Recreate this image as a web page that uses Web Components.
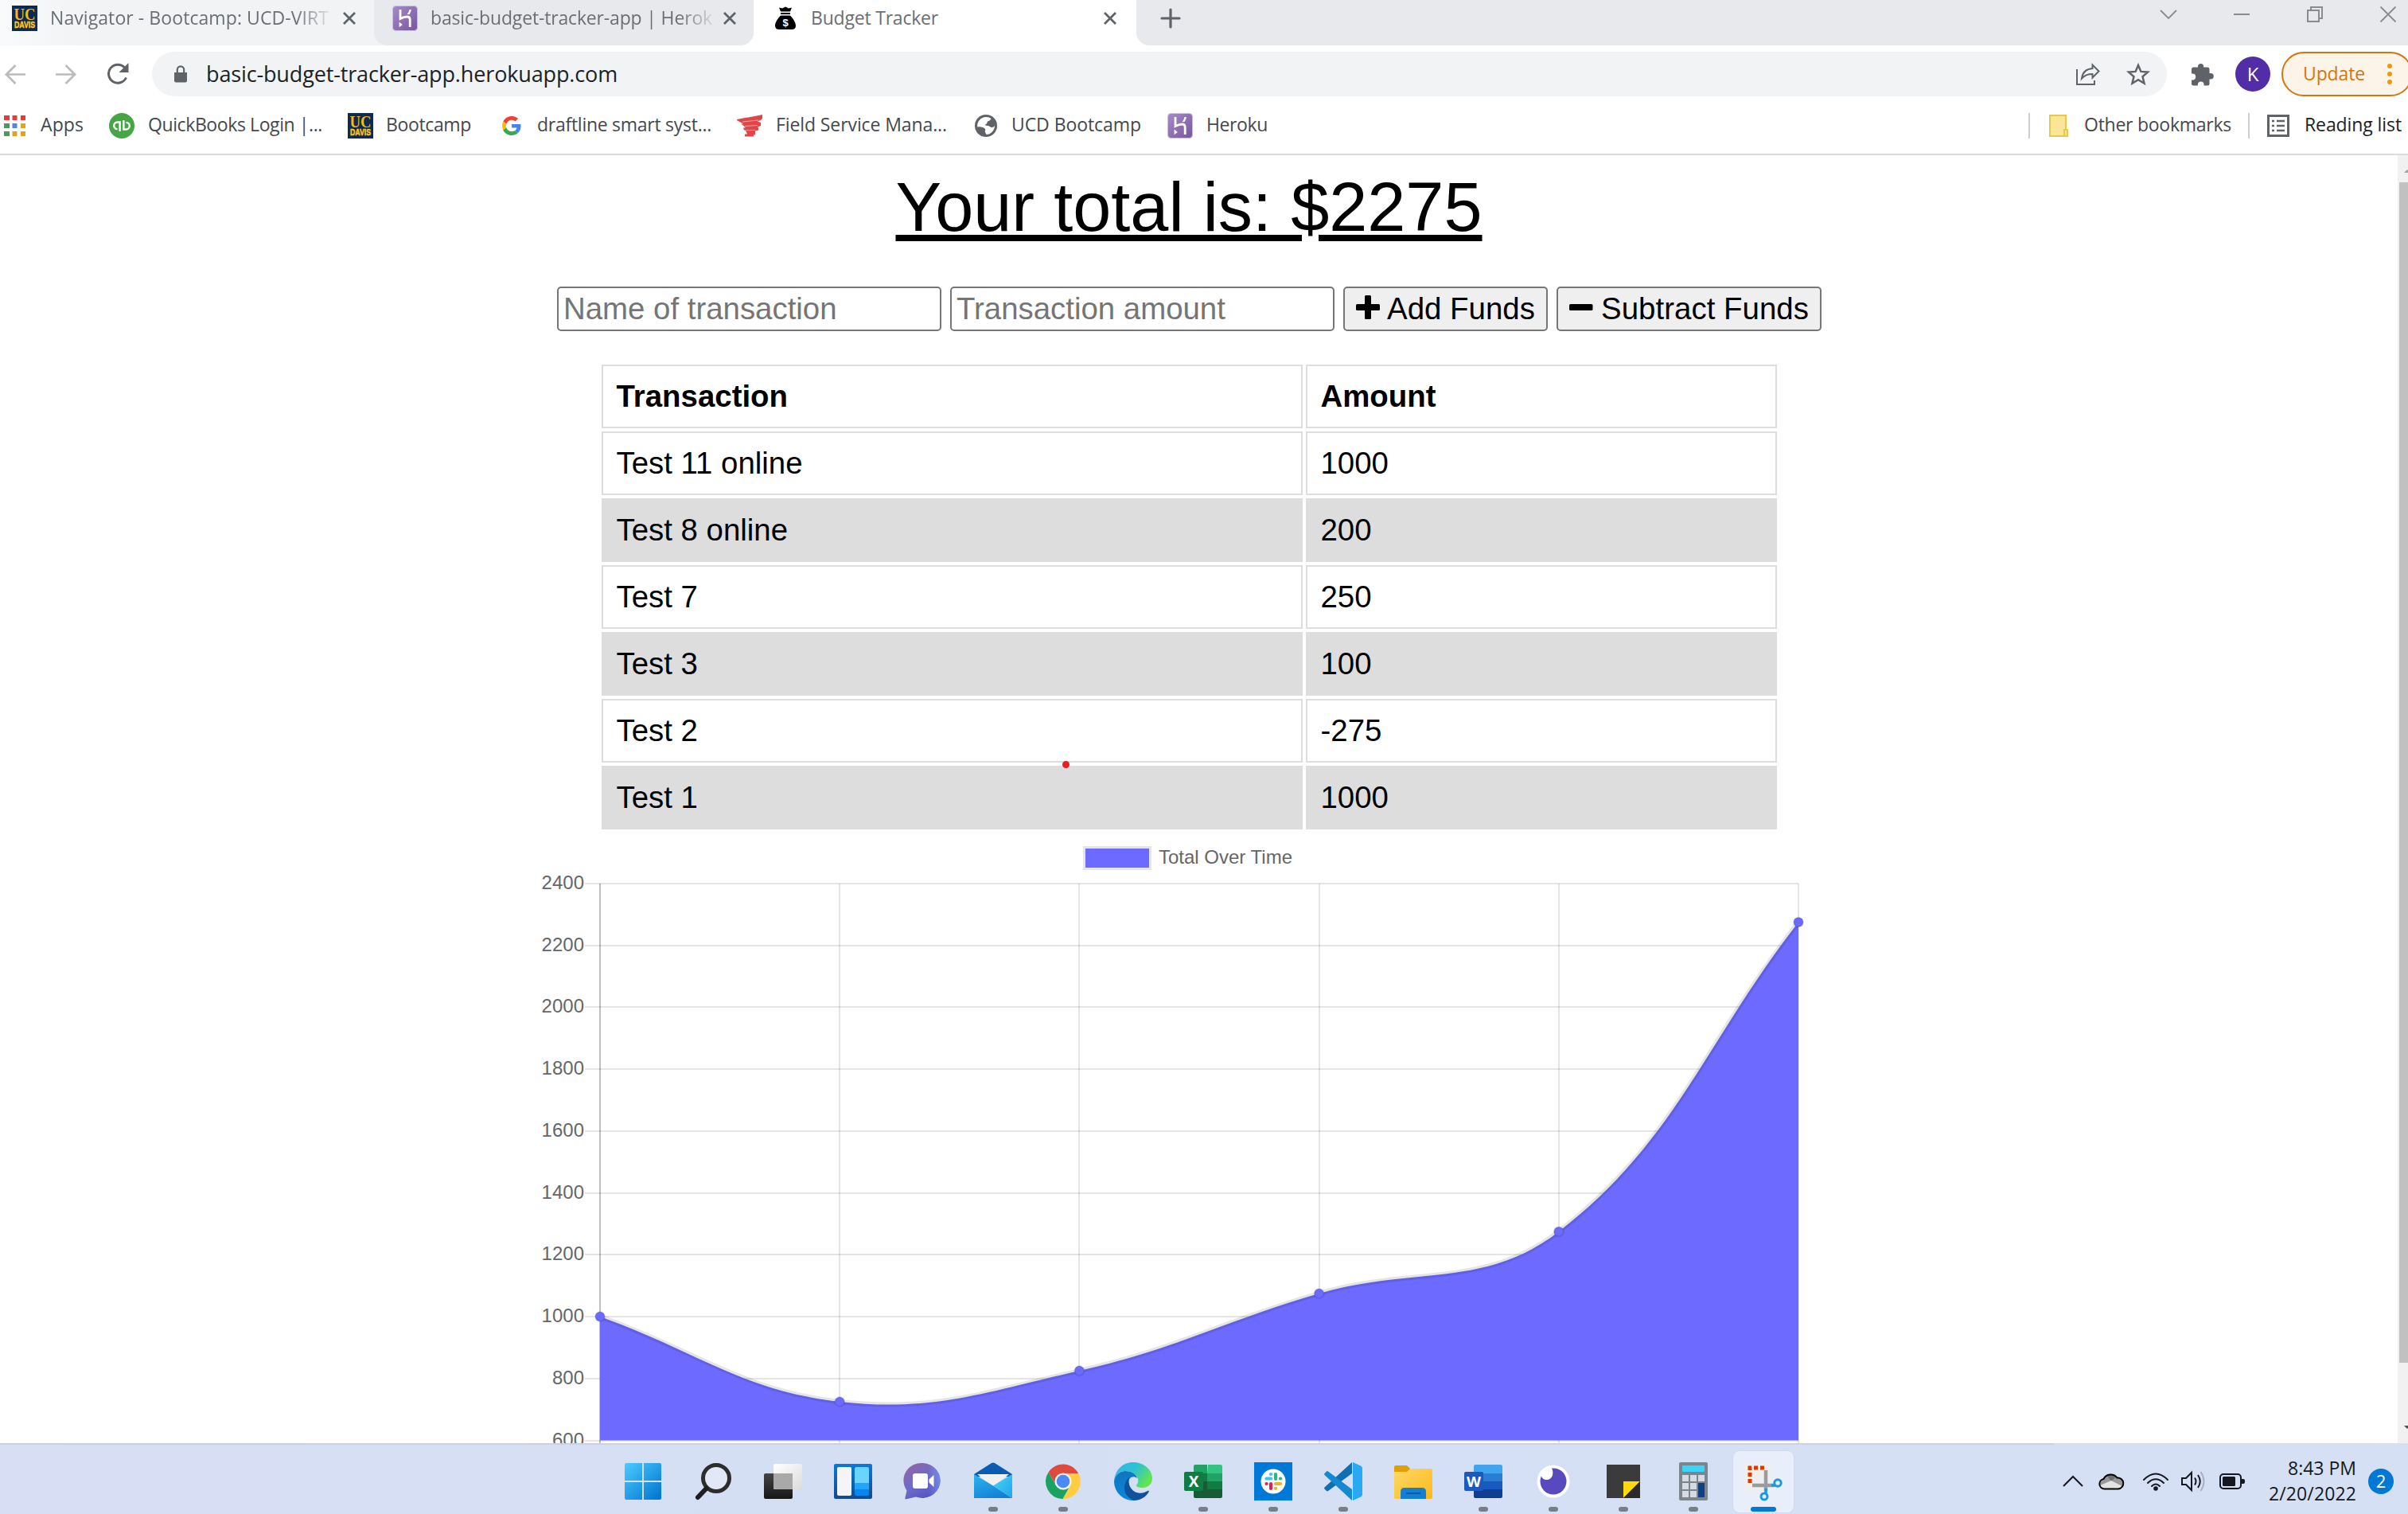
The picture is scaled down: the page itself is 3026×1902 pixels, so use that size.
<!DOCTYPE html>
<html lang="en">
<head>
<meta charset="utf-8">
<title>Budget Tracker</title>
<style>
html,body{margin:0;height:100%;overflow:hidden;background:#fff}
body{font-family:"Open Sans","Noto Sans",sans-serif}
</style>
</head>
<body>
<desktop-screen></desktop-screen>
<script>
const ICONS = {
  davis: `<svg viewBox="0 0 32 32"><path fill="#0f2a52" d="M0 0h32v32H0z"/><text x="16" y="17.500" text-anchor="middle" textLength="27" lengthAdjust="spacingAndGlyphs" font-family="Liberation Serif,serif" font-weight="bold" font-size="20" fill="#f2bb13">UC</text><text x="16" y="27.500" text-anchor="middle" textLength="26" lengthAdjust="spacingAndGlyphs" font-family="Liberation Sans,sans-serif" font-weight="bold" font-size="10.500" fill="#ffc71a" stroke="#ffc71a" stroke-width=".5">DAVIS</text></svg>`,
  heroku: `<svg viewBox="0 0 32 32"><defs><linearGradient id="g" x2="1" y2="1"><stop stop-color="#a58bcb"/><stop offset="1" stop-color="#7a559c"/></linearGradient></defs><rect x=".5" y=".5" width="31" height="31" rx="4" fill="url(#g)" stroke="#cdbfe0"/><path fill="none" stroke="#fff" stroke-width="2.800" d="M10 5v11.500q5-2.500 8.500-2.500 3.700 0 3.700 4V27"/><path fill="#fff" d="M8.600 20.500l4.200 3.400-4.200 3.400zM18.500 11q2.600-2.600 3-6h2.300q-.3 3.300-2.300 6z"/></svg>`,
  bag: `<svg viewBox="0 0 28 30"><path d="M6 1.500l4 1L14 .5l4 2 4-1-2 5H8zM8 8h12v2H8zM8 11.500h12c4 4 7 9 7 13 0 3-2 4.500-5 4.500H6c-3 0-5-1.500-5-4.500 0-4 3-9 7-13z"/><text x="14" y="24.500" text-anchor="middle" font-size="13" font-family="Liberation Sans,sans-serif" font-weight="bold" fill="#fff">$</text></svg>`,
  x: `<svg viewBox="0 0 18 18"><path d="M2 2l14 14M16 2L2 16" stroke="#5f6368" stroke-width="2.800"/></svg>`,
  plus: `<svg viewBox="0 0 26 26"><path d="M13 2v22M2 13h22" stroke="#5f6368" stroke-width="3.200" stroke-linecap="round"/></svg>`,
  chev: `<svg viewBox="0 0 20 20"><path d="M0 5l10 10L20 5" fill="none" stroke="#8a8b8e" stroke-width="1.800"/></svg>`,
  min: `<svg viewBox="0 0 20 20"><path d="M0 10h20" stroke="#8a8b8e" stroke-width="2"/></svg>`,
  rest: `<svg viewBox="0 0 20 20"><path d="M1 5h14v14H1zM5 5V1h14v14h-4" fill="none" stroke="#8a8b8e" stroke-width="2"/></svg>`,
  wx: `<svg viewBox="0 0 20 20"><path d="M.5.5l19 19M19.500.5l-19 19" stroke="#8a8b8e" stroke-width="1.800"/></svg>`,
  back: `<svg viewBox="0 0 28 28"><path d="M28 14H3M15 2L3 14l12 12" fill="none" stroke="#babcbe" stroke-width="2.800"/></svg>`,
  fwd: `<svg viewBox="0 0 28 28"><path d="M0 14h25M13 2l12 12-12 12" fill="none" stroke="#babcbe" stroke-width="2.800"/></svg>`,
  reload: `<svg viewBox="0 0 28 28"><path d="M24.500 18.500A11.500 11.500 0 1 1 22.500 6" fill="none" stroke="#5f6368" stroke-width="3"/><path d="M27.500 0v12h-12z" fill="#5f6368"/></svg>`,
  lock: `<svg viewBox="0 0 18 22"><path d="M1 9h16v10.500q0 2-2 2H3q-2 0-2-2z" fill="#5f6368"/><path d="M4.800 9V5.500a4.200 4.200 0 0 1 8.400 0V9" fill="none" stroke="#5f6368" stroke-width="2.200"/></svg>`,
  share: `<svg viewBox="0 0 30 28"><g fill="none" stroke="#5f6368" stroke-width="2"><path d="M1 8v19h22v-5"/><path d="M20.500 2.500l8 8-8 8v-4.500c-6 0-10 1.500-13.500 5.500C8 12 13 7.500 20.500 7z"/></g></svg>`,
  star: `<svg viewBox="0 0 30 28"><path d="M15 3l3.400 7.900 8.600.7-6.500 5.700 2 8.400-7.500-4.500-7.500 4.500 2-8.400L3 11.600l8.600-.7z" fill="none" stroke="#5f6368" stroke-width="2.500"/></svg>`,
  puzzle: `<svg viewBox="0 0 30 29"><path d="M1 8q0-2.500 2.500-2.500H9V4.500a3.600 3.600 0 0 1 7.200 0v1H21q2.500 0 2.500 2.500v5h1.500a3.800 3.800 0 0 1 0 7.600h-1.500v5.400q0 2.500-2.500 2.500h-4.500v-1.300a3.800 3.800 0 0 0-7.600 0v1.300H3.500Q1 28.500 1 26v-4.600h1.300a3.900 3.900 0 0 0 0-7.800H1z" fill="#5f6368"/></svg>`,
  dots: `<svg viewBox="0 0 6 28"><g fill="#ea9a0c"><circle cx="3" cy="4" r="3"/><circle cx="3" cy="14" r="3"/><circle cx="3" cy="24" r="3"/></g></svg>`,
  apps: `<svg viewBox="0 0 28 26"><g fill="#e53d35"><path d="M0 0h7v6H0zM10.500 0h6v6h-6zM21 0h6v6h-6z"/></g><path fill="#4c9a57" d="M0 10h7v6H0zM0 20h7v6H0z"/><path fill="#4e86ee" d="M10.500 10h6v6h-6z"/><path fill="#e0a51c" d="M21 10h6v6h-6zM10.500 20h6v6h-6zM21 20h6v6h-6z"/></svg>`,
  qb: `<svg viewBox="0 0 32 32"><circle cx="16" cy="16" r="16" fill="#46a546"/><g fill="none" stroke="#fff" stroke-width="2.400"><path d="M13.600 23V11.500H10.500a4.300 4.300 0 0 0 0 8.600"/><path d="M18.400 9v11.500H21.500a4.300 4.300 0 0 0 0-8.600"/></g></svg>`,
  google: `<svg viewBox="0 0 48 48"><path fill="#ea4335" d="M24 9.500c3.500 0 6.700 1.200 9.200 3.600l6.900-6.900C35.900 2.400 30.500 0 24 0 14.600 0 6.500 5.400 2.600 13.200l8 6.200C12.400 13.700 17.700 9.500 24 9.500z"/><path fill="#4285f4" d="M47 24.500c0-1.600-.2-3.100-.4-4.500H24v9h12.900c-.6 3-2.300 5.500-4.800 7.200l7.700 6C44.400 38 47 31.800 47 24.500z"/><path fill="#fbbc05" d="M10.500 28.600c-.5-1.500-.8-3-.8-4.600s.3-3.100.8-4.600l-8-6.200C.9 16.500 0 20.100 0 24s.9 7.500 2.600 10.800z"/><path fill="#34a853" d="M24 48c6.500 0 11.900-2.100 15.900-5.800l-7.700-6c-2.200 1.400-4.900 2.300-8.200 2.300-6.300 0-11.600-4.200-13.500-9.900l-8 6.200C6.500 42.600 14.600 48 24 48z"/></svg>`,
  field: `<svg viewBox="0 0 32 32"><path fill="#e0454a" d="M0 8q8-2 14-2.500Q22 4 32 2v5q-2 3-6 3.500l4 1.500v4l-4 1.500 1 1v3l-4 1v5h-2v2H10v-3h3l-2-5H9l-1-3h3l-3-3-3-2h3L0 9z"/><path stroke="#f0a0a2" stroke-width="1" d="M7 11l20-2M10 16.500l16-1M12 21.500h11" fill="none"/></svg>`,
  globe: `<svg viewBox="0 0 28 28"><circle cx="14" cy="14" r="14" fill="#5f6368"/><path fill="#fff" d="M14 3c3 0 5 .7 6.500 2-1 2-2 3-4.500 3.500-1 1.500 0 3-2.500 3.500-1 1 .5 2 2.500 2 3 0 3 2 5.500 2 2 0 2.500-1 3.500-2C25 20 20 25 14.500 25l-1.500-3c-1-1 1-3 0-4-2-2-5-3-9.700-2.500C2.300 8.500 8 3 14 3z"/></svg>`,
  folder: `<svg viewBox="0 0 24 28"><path d="M1 1h20v18h2v8H1z" fill="#fce597" stroke="#e6c84c" stroke-width="2"/><path d="M19 27v-8h4v8z" fill="#fce597" stroke="#e6c84c" stroke-width="2"/></svg>`,
  list: `<svg viewBox="0 0 28 28"><rect x="1.500" y="1.500" width="25" height="25" fill="none" stroke="#5f6368" stroke-width="3"/><path d="M6 8h3m3 0h10M6 14h3m3 0h10M6 20h3m3 0h10" stroke="#5f6368" stroke-width="2.600"/></svg>`,
  add: `<svg viewBox="0 0 30 30"><rect x="11" y="0" width="8" height="30" rx="1.500"/><rect x="0" y="11" width="30" height="8" rx="1.500"/></svg>`,
  sub: `<svg viewBox="0 0 30 30"><rect x="0" y="11" width="29.500" height="8" rx="1.500"/></svg>`,
  win: `<svg viewBox="0 0 48 48"><defs><linearGradient id="g" gradientUnits="userSpaceOnUse" x1="0" y1="0" x2="46" y2="48"><stop stop-color="#4ccdff"/><stop offset="1" stop-color="#0072cf"/></linearGradient></defs><path fill="url(#g)" d="M3 1h20v22H1V3q0-2 2-2zM25 1h20q2 0 2 2v20H25zM1 25h22v22H3q-2 0-2-2zM25 25h22v20q0 2-2 2H25z"/></svg>`,
  search: `<svg viewBox="0 0 48 48"><circle cx="28" cy="20" r="16.500" fill="#e2e8f5" stroke="#2d2d2d" stroke-width="5"/><path d="M15.500 33L5 44" stroke="#1f1f1f" stroke-width="6" stroke-linecap="round"/></svg>`,
  task: `<svg viewBox="0 0 48 48"><defs><linearGradient id="g" x2="1" y2="1"><stop stop-color="#fff"/><stop offset="1" stop-color="#dcdcdc"/></linearGradient><linearGradient id="d" x2="0" y2="1"><stop stop-color="#454545"/><stop offset="1" stop-color="#161616"/></linearGradient></defs><rect x="0" y="14" width="36" height="32" rx="2" fill="url(#d)"/><rect x="12" y="2" width="36" height="32" rx="2" fill="url(#g)"/><path d="M12 14h24v20H14q-2 0-2-2z" fill="#a9a9a9"/></svg>`,
  widgets: `<svg viewBox="0 0 48 48"><defs><linearGradient id="g" x2="0" y2="1"><stop stop-color="#0a7ad8"/><stop offset="1" stop-color="#13498f"/></linearGradient></defs><rect y="2" width="48" height="44" rx="2" fill="url(#g)"/><rect x="4" y="6" width="18" height="36" rx="2" fill="#f5f5f5"/><path d="M26 8q0-2 2-2h14q2 0 2 2v18H26z" fill="#69d5ff"/><path d="M26 26h18v8H26z" fill="#1fa5ff"/><path d="M26 34h18v6q0 2-2 2H28q-2 0-2-2z" fill="#0a84ee"/></svg>`,
  chat: `<svg viewBox="0 0 48 48"><defs><linearGradient id="g" x1=".1" y1=".1" x2=".7" y2="1"><stop stop-color="#8f66a8"/><stop offset=".5" stop-color="#6b6cc8"/><stop offset="1" stop-color="#5552c4"/></linearGradient><linearGradient id="h" x2="1" y2="0"><stop offset=".5" stop-color="#7d9aee" stop-opacity="0"/><stop offset="1" stop-color="#7d9aee"/></linearGradient></defs><path d="M24 1a22.500 22 0 1 1-9 42.500L2 46.500q-1 0-.5-2l2-9A22.500 22 0 0 1 24 1z" fill="url(#g)"/><path d="M24 1a22.500 22 0 1 1-9 42.500z" fill="url(#h)" opacity=".7"/><rect x="11" y="14" width="19" height="19" rx="3" fill="#fff"/><path d="M31.500 21.500l6-5.500v15l-6-5.500z" fill="#fff"/></svg>`,
  mail: `<svg viewBox="0 0 48 48"><defs><linearGradient id="g" x2=".6" y2="1"><stop stop-color="#2cb5f0"/><stop offset="1" stop-color="#1380d4"/></linearGradient><linearGradient id="h" x2="1" y2="1"><stop stop-color="#4ad4fb"/><stop offset="1" stop-color="#1fa6e8"/></linearGradient></defs><path d="M0 15L22 1q2-1 4 0l22 14v3H0z" fill="#0a5cb0"/><path d="M4 15h40L24 30z" fill="#f1f1f1"/><path d="M0 15l24 14.500L48 45H0z" fill="url(#g)"/><path d="M48 15v30L24 29.500z" fill="url(#h)"/></svg>`,
  chrome: `<svg viewBox="0 0 48 48"><path fill="#dd4b3e" d="M5.500 12.500A22 22 0 0 1 43.200 14H24A10.500 10.500 0 0 0 15 29z"/><path fill="#ffcd42" d="M43.200 14A22 22 0 0 1 23.300 46.200L33 29.500A10.500 10.500 0 0 0 24 14z"/><path fill="#1aa260" d="M5.500 12.500A22 22 0 0 0 23.300 46.200L31 32.500 24 34.500 14.800 29z"/><circle cx="24" cy="24" r="10.500" fill="#f4f4f4"/><circle cx="24" cy="24" r="8.300" fill="#4a8af4"/></svg>`,
  edge: `<svg viewBox="0 0 48 48"><defs><linearGradient id="g" x2="1" y2=".5"><stop stop-color="#35b3f0"/><stop offset=".55" stop-color="#2cc3d0"/><stop offset="1" stop-color="#62e354"/></linearGradient><linearGradient id="b" x2=".3" y2="1"><stop stop-color="#1173b8"/><stop offset="1" stop-color="#0a86dd"/></linearGradient></defs><path fill="url(#b)" d="M0 24C1 15 8 11 14 11c9 0 14 4 15 9-5-4-11-1-11 6 0 10 4 19 8 22A24 24 0 0 1 0 24z"/><path fill="#10519c" d="M19 19c-2 9 2 16 9 19 6 2 11 0 15-2.500l1 1C40 44 33 48 25 48c-8-3-13-10-12-18 1-5 3-9 6-11z"/><path fill="url(#g)" d="M.2 22C2 9 11 0 24 0c14 0 24 10 24 20 0 8-6 12-12 12-5 0-8-1-8-3 1-2 3-3 2-8C28 14 21 11 14 11 8 11 3 15 .2 22z"/></svg>`,
  excel: `<svg viewBox="0 0 48 48"><path fill="#33c481" d="M30 3h16q2 0 2 2v9H29z"/><path fill="#21a366" d="M12 5q0-2 2-2h15v11H12zM29 14h19v10H29z"/><path fill="#107c41" d="M29 24h19v10H29z"/><path fill="#185c37" d="M12 24h17v10h19v9q0 2-2 2H14q-2 0-2-2z"/><path fill="#107c41" d="M12 14h17v10H12z"/><rect y="12" width="24" height="24" rx="2" fill="#107c41"/><text x="12" y="31" text-anchor="middle" font-size="19" font-weight="bold" font-family="Open Sans,sans-serif" fill="#fff">X</text></svg>`,
  slack: `<svg viewBox="0 0 48 48"><path fill="#0078d7" d="M0 0h48v48H0z"/><circle cx="24" cy="24" r="15.500" fill="#fff"/><g stroke-width="4.200" stroke-linecap="round"><path stroke="#36c5f0" d="M21 15v.1M15.500 20.500H21"/><path stroke="#2eb67d" d="M27 15v6M33 20.500h-.1"/><path stroke="#e01e5a" d="M15.500 27h.1M21 27v6"/><path stroke="#ecb22e" d="M27 27h6M27 33v-.1"/></g></svg>`,
  code: `<svg viewBox="0 0 48 48"><path fill="#0f6fb3" d="M35 0v14L5 36q-1 .8-2 0l-2.500-2.500q-1-1 0-2z"/><path fill="#28a9f1" d="M36 0l10 4.500q2 1 2 3v33q0 2-2 3L36 48z"/><path fill="#1488d0" d="M35 48V34L5 11.500q-1-.8-2 0L.5 14q-1 1 0 2z"/></svg>`,
  files: `<svg viewBox="0 0 48 48"><defs><linearGradient id="g" x2="1" y2="1"><stop stop-color="#ffd869"/><stop offset="1" stop-color="#fbb917"/></linearGradient></defs><path fill="#e0a005" d="M0 6q0-2 2-2h14l4 4v8H0z"/><path fill="url(#g)" d="M0 12h16l4-4h26q2 0 2 2v34q0 2-2 2H2q-2 0-2-2z"/><path fill="#1280d2" d="M8 46V37q0-5 5-5h22q5 0 5 5v9z"/><path d="M15 39h18" stroke="#0d57a3" stroke-width="2"/></svg>`,
  word: `<svg viewBox="0 0 48 48"><path fill="#41a5ee" d="M12 5q0-2 2-2h32q2 0 2 2v9H12z"/><path fill="#2b7cd3" d="M12 14h36v10H12z"/><path fill="#185abd" d="M12 24h36v10H12z"/><path fill="#103f91" d="M12 34h36v9q0 2-2 2H14q-2 0-2-2z"/><rect y="12" width="24" height="24" rx="2" fill="#1d59bd"/><text x="12" y="31" text-anchor="middle" font-size="18" textLength="18" lengthAdjust="spacingAndGlyphs" font-weight="bold" font-family="Open Sans,sans-serif" fill="#fff">W</text></svg>`,
  orb: `<svg viewBox="0 0 48 48"><circle cx="24" cy="24" r="20.500" fill="#fff"/><circle cx="24" cy="24" r="16.500" fill="#5849be"/><path fill="#fff" d="M9 14Q15 6 22 7.500C25 13 23 21 17 22 12 22.500 8 20 9 14z"/></svg>`,
  note: `<svg viewBox="0 0 48 48"><path fill="#3b3b3b" d="M3 3h42v42H3z"/><path fill="#ffd90a" d="M24 24h21L24 45z"/><path fill="#2a2a2a" d="M45 24v21H24z"/></svg>`,
  calc: `<svg viewBox="0 0 48 48"><rect x="6" width="36" height="48" rx="2" fill="#7b858e"/><rect x="10" y="4" width="28" height="8" rx="1" fill="#3fd3fa"/><g fill="#d5dbe1"><path d="M10 16h8v8h-8zM20 16h8v8h-8zM30 16h8v8h-8zM10 26h8v8h-8zM20 26h8v8h-8zM10 36h8v8h-8zM20 36h8v8h-8z"/></g><path fill="#123f80" d="M30 26h8v18h-8z"/></svg>`,
  snip: `<svg viewBox="0 0 48 48"><rect width="33" height="36" rx="3" fill="#efefef"/><path d="M7 26V7h18" fill="none" stroke="#d83b01" stroke-width="5" stroke-dasharray="5 3"/><path d="M27 10v26M10 29h28" stroke="#9a9da0" stroke-width="4.500"/><circle cx="42" cy="26" r="4.200" fill="none" stroke="#1a9be0" stroke-width="3"/><circle cx="25" cy="43" r="4" fill="none" stroke="#1a9be0" stroke-width="3"/><path d="M34 29h5M27 33v7" stroke="#1a9be0" stroke-width="3.500"/></svg>`,
  up: `<svg viewBox="0 0 26 14"><path d="M1 13L13 1l12 12" fill="none" stroke="#15181e" stroke-width="2"/></svg>`,
  cloud: `<svg viewBox="0 0 32 22"><defs><clipPath id="c"><path d="M7.500 20.500a6.300 6.300 0 0 1-1-12.500A10 10 0 0 1 23.500 6.500a7 7 0 0 1 1.500 14z"/></clipPath></defs><g clip-path="url(#c)"><path d="M0 0h32v22H0z" fill="#999"/><path d="M8 0h20l-12 11z" fill="#707070"/><path d="M16 10l16 8v4H0v-5z" fill="#e3e3e3"/></g><path d="M7.500 20.500a6.300 6.300 0 0 1-1-12.500A10 10 0 0 1 23.500 6.500a7 7 0 0 1 1.500 14z" fill="none" stroke="#000" stroke-width="2"/></svg>`,
  wifi: `<svg viewBox="0 0 32 23"><g fill="none" stroke="#15181e" stroke-width="2" stroke-linecap="round"><path d="M1 9Q16-6 31 9M6 13q10-9.500 20 0M11 17q5-5 10 0"/></g><circle cx="16" cy="20" r="2.800" fill="#15181e"/></svg>`,
  vol: `<svg viewBox="0 0 32 28"><g fill="none" stroke="#15181e" stroke-width="2"><path d="M1 10h5l7-7v22l-7-7H1zM17 9.500q3 4.500 0 9M21 6q5.500 8 0 16"/><path d="M24.500 2q8 12 0 24" stroke="#a9b2c5"/></g></svg>`,
  bat: `<svg viewBox="0 0 32 20"><rect x="1" y="1" width="26" height="18" rx="4" fill="none" stroke="#15181e" stroke-width="2"/><path d="M4 5.500q0-1.500 1.500-1.500h13q1.500 0 1.500 1.500v9q0 1.500-1.500 1.500h-13Q4 16 4 14.500zM28 7h2q2 0 2 2v2q0 2-2 2h-2z" fill="#15181e"/></svg>`
};

/* Inline SVG icon: name, width (w), height (h) */
customElements.define('ui-icon', class extends HTMLElement {
  connectedCallback(){
    if (this.shadowRoot) return;
    const w = this.getAttribute('w') || 32, h = this.getAttribute('h') || w;
    this.attachShadow({mode:'open'}).innerHTML = `<style>:host{display:block;flex:none;width:${w}px;height:${h}px}svg{display:block;width:100%;height:100%;overflow:visible}</style>${ICONS[this.getAttribute('name')]}`;
  }
});

/* One line of text that tracks itself out or in to fill a given width */
customElements.define('fit-text', class extends HTMLElement {
  connectedCallback(){
    if (this.shadowRoot) return;
    const w = +this.getAttribute('w');
    const line = this.hasAttribute('underline') ? 'text-decoration:underline 8px #000;text-underline-offset:5px' : '';
    this.attachShadow({mode:'open'}).innerHTML = `<style>:host{display:block;flex:none;width:${w}px;white-space:pre}span{display:inline-block;${line}}</style><span><slot></slot></span>`;
    const s = this.shadowRoot.querySelector('span');
    const n = this.textContent.length;
    s.style.letterSpacing = ((w - s.getBoundingClientRect().width) / n).toFixed(3) + 'px';
  }
});

class Base extends HTMLElement {
  connectedCallback(){
    if (this.shadowRoot) return;
    this.attachShadow({mode:'open'}).innerHTML = this.render();
  }
}

customElements.define('tab-strip', class extends Base {
  render(){ return `<style>
    :host{display:flex;height:57px;background:#fff;font-size:23px;color:#6b6e72}
    .tab{display:flex;align-items:center;height:46px;padding-bottom:11px;box-sizing:content-box;flex:none}
    .t1{width:455px;padding-left:15px;background:linear-gradient(90deg,#f9fafb,#f2f3f5 110px)}
    .t2{width:454px;padding-left:23px;background:#e8e9ec;border-radius:0 0 16px 16px}
    .mask{width:477px;flex:none;background:linear-gradient(90deg,#f2f3f5 50%,#fff 50%)}
    .t3{width:455px;padding-left:26px}
    .rest{flex:1;background:#e8e9ed;border-bottom-left-radius:16px;display:flex;height:57px;box-sizing:border-box;padding-right:15px}
    .clip{flex:none;overflow:hidden;-webkit-mask:linear-gradient(90deg,#000 88%,rgba(0,0,0,.15))}
    fit-text{margin-top:-3px}
    .win{display:flex;gap:72px;margin-left:auto;padding-top:8px}
  </style>
  <div class="tab t1"><ui-icon name="davis"></ui-icon><div class="clip" style="width:350px;margin-left:16px"><fit-text w="350">Navigator - Bootcamp: UCD-VIRT</fit-text></div><ui-icon name="x" w="18" style="margin-left:17px"></ui-icon></div>
  <div class="mask"><div class="tab t2"><ui-icon name="heroku"></ui-icon><div class="clip" style="width:354px;margin-left:16px"><fit-text w="354">basic-budget-tracker-app | Herok</fit-text></div><ui-icon name="x" w="18" style="margin-left:13px"></ui-icon></div></div>
  <div class="tab t3"><ui-icon name="bag" w="28" h="30"></ui-icon><fit-text w="160" style="margin-left:18px">Budget Tracker</fit-text><ui-icon name="x" w="18" style="margin-left:207px"></ui-icon></div>
  <div class="rest"><ui-icon name="plus" w="26" style="margin:10px 0 0 30px"></ui-icon>
    <div class="win"><ui-icon name="chev" w="20"></ui-icon><ui-icon name="min" w="20"></ui-icon><ui-icon name="rest" w="20"></ui-icon><ui-icon name="wx" w="20"></ui-icon></div></div>`; }
});

customElements.define('address-bar', class extends Base {
  render(){ return `<style>
    :host{display:flex;align-items:center;height:72px;background:#fff;overflow:hidden}
    .omni{display:flex;align-items:center;width:2532px;height:56px;box-sizing:border-box;border-radius:28px;background:#f1f3f4;padding:0 21px 0 27px;flex:none;margin-left:29px}
    .url{font-size:27px;color:#202124;margin:-1px 0 0 23px}
    .end{margin-left:auto;display:flex;align-items:center;gap:33px}
    .av{width:44px;height:44px;border-radius:50%;background:#512da8;color:#fff;text-align:center;font-size:24px;line-height:43px;margin-left:26px;flex:none}
    .up{display:flex;align-items:center;width:165px;height:56px;box-sizing:border-box;border:2px solid #d6750d;border-radius:28px;background:#fcf4e9;margin-left:14px;padding-left:25px;color:#d6750d;font-size:23px;flex:none}
  </style>
  <ui-icon name="back" w="27" style="margin-left:5px"></ui-icon><ui-icon name="fwd" w="27" style="margin-left:38px"></ui-icon><ui-icon name="reload" w="28" style="margin-left:37px"></ui-icon>
  <div class="omni"><ui-icon name="lock" w="18" h="22"></ui-icon><fit-text class="url" w="517">basic-budget-tracker-app.herokuapp.com</fit-text>
  <div class="end"><ui-icon name="share" w="30" h="28"></ui-icon><ui-icon name="star" w="30" h="28"></ui-icon></div></div>
  <ui-icon name="puzzle" w="30" h="29" style="margin-left:30px"></ui-icon><div class="av">K</div>
  <div class="up"><fit-text w="78" style="margin-top:-2px">Update</fit-text><ui-icon name="dots" w="6" h="28" style="margin-left:28px"></ui-icon></div>`; }
});

customElements.define('book-mark', class extends Base {
  render(){ const a = n => this.getAttribute(n); return `<style>
    :host{display:flex;align-items:center;flex:none}fit-text{margin:-4px 0 0 ${a('gap')||17}px}
  </style><ui-icon name="${a('icon')}" w="${a('iw')||32}" h="${a('ih')||a('iw')||32}"></ui-icon><fit-text w="${a('tw')}">${a('label')}</fit-text>`; }
});

customElements.define('bookmark-bar', class extends Base {
  render(){
    const b = (ml,icon,tw,label,iw=32,ih=iw,gap=17) => `<book-mark style="margin-left:${ml}px" icon="${icon}" tw="${tw}" label="${label}" iw="${iw}" ih="${ih}" gap="${gap}"></book-mark>`;
    return `<style>
    :host{display:flex;align-items:center;height:58px;padding-bottom:6px;border-bottom:2px solid #dcdcdc;background:#fff;font-size:23px;color:#45484d;overflow:hidden}
    i{width:2px;height:32px;background:#cfcfcf;flex:none}
    .r{margin-left:auto;display:flex;align-items:center;padding-right:8px}
    .dark{color:#202124}
    </style>
    ${b(5,'apps',54,'Apps',28,26,18)}${b(32,'qb',219,'QuickBooks Login |...')}${b(32,'davis',107,'Bootcamp',32,32,16)}${b(39,'google',219,'draftline smart syst...',24,24,20)}${b(32,'field',215,'Field Service Mana...')}${b(35,'globe',163,'UCD Bootcamp',28,28,18)}${b(33,'heroku',77,'Heroku')}
    <div class="r"><i></i>${b(24,'folder',185,'Other bookmarks',24,28,20)}<i style="margin-left:21px"></i><span class="dark">${b(22,'list',122,'Reading list',28,28,19)}</span></div>`; }
});

customElements.define('budget-form', class extends Base {
  render(){ return `<style>
    :host{display:flex;width:1588px;font:38.4px "Liberation Sans",Arial,sans-serif}
    input,button{font:inherit;height:56px;box-sizing:border-box;border:2px solid #767676;border-radius:5px;margin:0;flex:none}
    input{width:483px;padding:0 6px;margin-right:11px;background:#fff}
    input::placeholder{color:#757575}
    button{background:#efefef;color:#000;display:flex;align-items:center;padding:0 0 0 14px}
  </style><input placeholder="Name of transaction"><input placeholder="Transaction amount">
  <button style="width:257px;margin-right:11px"><ui-icon name="add" w="30" style="margin-top:-4px"></ui-icon><fit-text w="186" style="margin-left:9px">Add Funds</fit-text></button>
  <button style="width:333px"><ui-icon name="sub" w="30" style="margin-top:-4px"></ui-icon><fit-text w="261" style="margin-left:10px">Subtract Funds</fit-text></button>`; }
});

customElements.define('transaction-table', class extends Base {
  render(){
    const rows=[['Test 11 online','1000'],['Test 8 online','200'],['Test 7','250'],['Test 3','100'],['Test 2','-275'],['Test 1','1000']];
    return `<style>
    :host{display:grid;grid-template-columns:881px 592px;gap:4px;font:38.4px/44px "Liberation Sans",Arial,sans-serif;color:#000}
    div{box-sizing:border-box;height:80px;border:2px solid #ddd;padding:16px 17px}
    .h{font-weight:bold}.g{background:#ddd}
    </style><div class="h">Transaction</div><div class="h">Amount</div>${rows.map((r,i)=>r.map(c=>`<div class="${i%2?'g':''}">${c}</div>`).join('')).join('')}`; }
});

customElements.define('total-chart', class extends Base {
  render(){
    const X=i=>754+301.2*i, Y=v=>1110+(2400-v)*699.5/1800;
    const pts=[1000,725,825,1075,1275,2275].map((v,i)=>({x:X(i),y:Y(v)}));
    const cp=pts.map((p,i)=>{
      const a=pts[i-1]||p,b=pts[i+1]||p;
      const d1=Math.hypot(p.x-a.x,p.y-a.y),d2=Math.hypot(b.x-p.x,b.y-p.y),s=(d1+d2)||1;
      const f=.4*d1/s,g=.4*d2/s;
      return {px:p.x-f*(b.x-a.x),py:p.y-f*(b.y-a.y),nx:p.x+g*(b.x-a.x),ny:p.y+g*(b.y-a.y)};
    });
    let d=`M${pts[0].x} ${pts[0].y}`;
    for(let i=1;i<6;i++) d+=`C${cp[i-1].nx} ${cp[i-1].ny} ${cp[i].px} ${cp[i].py} ${pts[i].x} ${pts[i].y}`;
    let grid='',lab='';
    for(let v=600;v<=2400;v+=200){const y=Math.round(Y(v));grid+=`<path d="M735 ${y}H${X(5)}"/>`;lab+=`<text x="734" y="${y+6.5}" text-anchor="end">${v}</text>`;}
    for(let i=0;i<6;i++){const x=Math.round(X(i));grid+=`<path d="M${x} 1110V1830" ${i?'':'stroke="#000" stroke-opacity=".25"'}/>`;}
    return `<style>:host{display:block;height:771px;overflow:hidden}svg{display:block}text{font:24px "Liberation Sans",Arial,sans-serif;fill:#666}</style>
    <svg width="2988" height="800" viewBox="0 1042 2988 800">
      <rect x="1361" y="1063" width="86" height="30" fill="#e5e5e5"/><rect x="1364" y="1066" width="80" height="24" fill="#6c6aff"/>
      <text x="1456" y="1084.500" textLength="168">Total Over Time</text>
      <g stroke="#000" stroke-opacity=".1" stroke-width="2" fill="none">${grid}</g>${lab}
      <path d="${d}V1809.500H754z" fill="#6c6aff"/>
      <path d="${d}" fill="none" stroke="#000" stroke-opacity=".1" stroke-width="6"/>
      ${pts.map(p=>`<circle cx="${p.x}" cy="${p.y}" r="6" fill="#6c6aff" stroke="#000" stroke-opacity=".1" stroke-width="2"/>`).join('')}
    </svg>`; }
});

customElements.define('budget-page', class extends Base {
  render(){ return `<style>
    :host{display:flex;height:1618px;background:#fff;overflow:hidden}
    main{width:2988px;padding:15px 25px 0 0;display:flex;flex-direction:column;align-items:center;position:relative;flex:none}
    h1{margin:0;font:86.4px/100px "Liberation Sans",Arial,sans-serif;color:#000;height:100px}
    budget-form{margin-top:50px}transaction-table{margin-top:42px}
    .bar{flex:1;background:#f1f1f1;padding:18px 0 0 2px;display:flex;flex-direction:column;overflow:hidden}
    .thumb{height:1483px;margin-top:12px;background:#c1c1c1;flex:none}
    .a{width:0;height:0;border:4px solid transparent;margin-left:6px;flex:none}
    .u{border-top:0;border-bottom-color:#a3a3a3}.d{border-bottom:0;border-top-color:#505050;margin-top:79px}
    .dot{position:absolute;left:1335px;top:761px;width:9px;height:9px;border-radius:50%;background:#ec1c24}
  </style><main><h1><fit-text w="737" underline>Your total is: $2275</fit-text></h1><budget-form></budget-form><transaction-table></transaction-table><total-chart></total-chart><div class="dot"></div></main>
  <div class="bar"><div class="a u"></div><div class="thumb"></div><div class="a d"></div></div>`; }
});

customElements.define('task-item', class extends Base {
  render(){ const s=this.getAttribute('state'); return `<style>
    :host{display:flex;justify-content:center;width:88px;height:86px;flex:none}
    .tile{display:flex;flex-direction:column;align-items:center;width:76px;height:77px;margin-top:8px;padding-top:14px;box-sizing:border-box;border-radius:8px;${s==='active'?'background:#e9effa;box-shadow:0 0 0 1px #d1daec':''}}
    b{width:12px;height:6px;border-radius:3px;background:#777d89;margin-top:8px}
    .active{width:32px;background:#0078d4}
  </style><div class="tile"><ui-icon name="${this.getAttribute('icon')}" w="48"></ui-icon>${s?`<b class="${s}"></b>`:''}</div>`; }
});

customElements.define('task-bar', class extends Base {
  render(){
    const items=[['win'],['search'],['task'],['widgets'],['chat'],['mail','on'],['chrome','on'],['edge'],['excel','on'],['slack','on'],['code','on'],['files'],['word','on'],['orb','on'],['note','on'],['calc','on'],['snip','active']];
    return `<style>
    :host{display:flex;height:89px;background:linear-gradient(90deg,#d8def3,#d5dff3 30%,#d5dff5 60%,#d5e0f4);color:#15181e;font-size:23px}
    .apps{display:flex;width:1817px;padding:0 0 0 764px;border-top:2px solid #c8d1e7;box-sizing:content-box}
    .tray{display:flex;align-items:center;padding-left:11px;height:96px;flex:none}
    .clock{width:110px;display:flex;flex-direction:column;align-items:flex-end;line-height:32px;margin:-2px 0 0 30px}
    .n{width:32px;height:32px;border-radius:50%;background:#0078d4;color:#fff;text-align:center;line-height:31px;margin-left:15px;font-size:22px}
    </style><div class="apps">${items.map(([n,s])=>`<task-item icon="${n}" state="${s||''}"></task-item>`).join('')}</div>
    <div class="tray"><ui-icon name="up" w="26" h="14"></ui-icon><ui-icon name="cloud" w="32" h="22" style="margin-left:19px"></ui-icon><ui-icon name="wifi" w="32" h="23" style="margin-left:24px"></ui-icon><ui-icon name="vol" w="32" h="28" style="margin-left:16px"></ui-icon><ui-icon name="bat" w="32" h="20" style="margin-left:16px"></ui-icon>
    <div class="clock"><fit-text w="86">8:43 PM</fit-text><fit-text w="110">2/20/2022</fit-text></div><div class="n">2</div></div>`; }
});

customElements.define('desktop-screen', class extends Base {
  render(){ return `<style>:host{display:flex;flex-direction:column;width:3026px;height:1902px;overflow:hidden}:host>*{flex:none}</style>
  <tab-strip></tab-strip><address-bar></address-bar><bookmark-bar></bookmark-bar><budget-page></budget-page><task-bar></task-bar>`; }
});
</script>
</body>
</html>
